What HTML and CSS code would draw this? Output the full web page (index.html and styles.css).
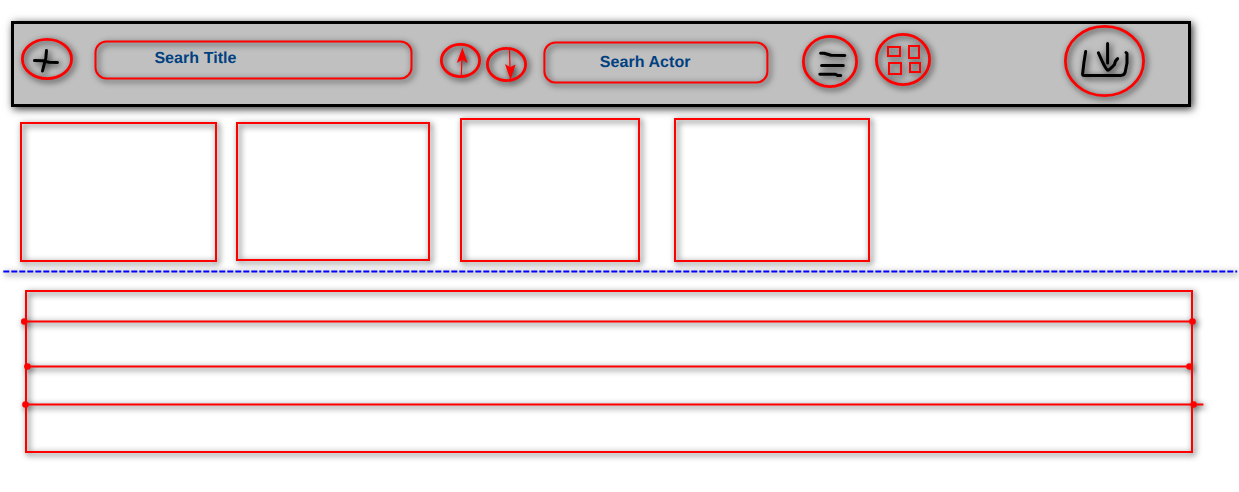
FILE: index.html
```html
<!DOCTYPE html>
<html lang="en">
<head>
<meta charset="utf-8">
<title>Media library</title>
<link rel="stylesheet" href="styles.css">
</head>
<body>
<header class="toolbar">
  <svg class="icon add" width="52" height="42" viewBox="0 0 52 42">
    <ellipse class="ring" cx="26" cy="21" rx="24.6" ry="19.6"/>
    <path class="ink" d="M25.5 12.6L24.8 20L21.5 33M13.5 22.6L22 22.7L28 24.2L36.5 24.4"/>
  </svg>
  <div class="field field-title">
    <svg class="outline" width="319" height="40"><rect x="1.5" y="1.5" width="316" height="37" rx="11"/></svg>
    <span>Searh Title</span>
  </div>
  <svg class="icon up" width="41" height="35" viewBox="0 0 41 35">
    <ellipse class="ring" cx="20.5" cy="17.5" rx="19.1" ry="16.1"/>
    <path class="shaft" d="M21.3 33L22 12"/>
    <path class="head" d="M22.4 4.5L27.6 20L22.2 16.7L16.8 20Z"/>
  </svg>
  <svg class="icon down" width="41" height="35" viewBox="0 0 41 35">
    <ellipse class="ring" cx="20.5" cy="17.5" rx="19.1" ry="16.1"/>
    <path class="shaft" d="M23.5 3L24 22"/>
    <path class="head" d="M24.5 33L19 17L24.2 20.3L29.6 17.6Z"/>
  </svg>
  <div class="field field-actor">
    <svg class="outline" width="226" height="43"><rect x="1.4" y="1.5" width="223" height="40" rx="11"/></svg>
    <span>Searh Actor</span>
  </div>
  <svg class="icon list" width="56" height="53" viewBox="0 0 56 53">
    <ellipse class="ring" cx="28" cy="26.5" rx="26.6" ry="25.1"/>
    <path class="ink" d="M18.6 18.3L22 18.2L29 20.2L42.8 20.4M19.6 30.4H41.3M17.8 39.3L33.5 39.2L36 40.6H38.7"/>
  </svg>
  <svg class="icon tiles" width="56" height="53" viewBox="0 0 56 53">
    <ellipse class="ring" cx="28" cy="26.5" rx="26.6" ry="25.1"/>
    <path class="tile" d="M13 14h12v9h-12zM34 13h10v12h-10zM14 30h12v11h-12zM35 30h10v9h-10z"/>
  </svg>
  <svg class="icon download" width="81" height="72" viewBox="0 0 81 72">
    <ellipse class="ring" cx="40.5" cy="36" rx="39.1" ry="34.6"/>
    <path class="ink" d="M21.7 26.5L20 37L18.6 49Q18.6 50.5 20 50.5H56.5Q60.5 50.3 61.2 47L63 38V28.5L62 27.5M43.6 18.4V38M34.4 27.8L39 38Q42.5 45 44 45.2Q45.5 45 50.5 39.5Q51 35.5 53.6 33.7"/>
  </svg>
</header>

<main>
  <section class="cards">
    <article class="card card-1"></article>
    <article class="card card-2"></article>
    <article class="card card-3"></article>
    <article class="card card-4"></article>
  </section>

  <svg class="divider" width="1239" height="3" viewBox="0 0 1239 3">
    <path d="M3.3 1.5H1237.2"/>
  </svg>

  <section class="table">
    <div class="row row-1"></div>
    <svg class="rule" width="1190" height="7" viewBox="0 0 1190 7">
      <path d="M7.3 3.5H1175.5"/><circle cx="7.3" cy="3.5" r="3.3"/><circle cx="1175.5" cy="3.5" r="3.3"/>
    </svg>
    <div class="row row-2"></div>
    <svg class="rule" width="1190" height="7" viewBox="0 0 1190 7">
      <path d="M10.4 3.5H1172.5"/><circle cx="10.4" cy="3.5" r="3.3"/><circle cx="1172.5" cy="3.5" r="3.3"/>
    </svg>
    <div class="row row-3"></div>
    <svg class="rule" width="1190" height="7" viewBox="0 0 1190 7">
      <path d="M8.5 3.5H1186.4"/><circle cx="8.5" cy="3.5" r="3.3"/><circle cx="1176.6" cy="3.5" r="3.3"/>
    </svg>
    <div class="row row-4"></div>
  </section>
</main>
</body>
</html>
```
FILE: styles.css
```css
:root {
  --red: #ff0000;
  --shadow: drop-shadow(2px 2px 3px rgba(0, 0, 0, .8));
}

* { box-sizing: border-box; }

body {
  margin: 0;
  padding-top: 21px;
  height: 492px;
  overflow: hidden;
  background: #fff;
  font-family: "Liberation Sans", Arial, sans-serif;
}

svg { display: block; flex: none; overflow: visible; }

/* Toolbar */
.toolbar {
  display: flex;
  align-items: flex-start;
  width: 1180px;
  height: 86px;
  margin-left: 11px;
  border: 3px solid #000;
  background: #c0c0c0;
  box-shadow: 2px 2px 8px rgba(0, 0, 0, .8);
}

.icon { filter: var(--shadow); fill: none; }
.ring { stroke: var(--red); stroke-width: 2.8; }
.ink { stroke: #000; stroke-width: 3; stroke-linecap: round; stroke-linejoin: round; }
.tile { stroke: var(--red); stroke-width: 2; }
.shaft { stroke: var(--red); stroke-width: 1.2; }
.head { fill: var(--red); }

.add { margin: 14px 0 0 7px; }
.up { margin: 19px 0 0 27px; }
.down { margin: 23px 0 0 5px; }
.list { margin: 11px 0 0 33px; }
.tiles { margin: 9px 0 0 17px; }
.download { margin: 1px 0 0 133px; }

.field {
  display: grid;
  flex: none;
  color: #004080;
  font-size: 16px;
  font-weight: bold;
  line-height: 18px;
  letter-spacing: .06px;
  text-rendering: geometricPrecision;
  white-space: nowrap;
}

.field > * { grid-area: 1 / 1; }

.outline {
  fill: none;
  stroke: var(--red);
  stroke-width: 2;
  filter: var(--shadow);
}

.field-title { width: 319px; height: 40px; margin: 16px 0 0 21px; }
.field-title span { padding: 10px 0 0 60.4px; }
.field-actor { width: 226px; height: 43px; margin: 17px 0 0 16px; }
.field-actor span { padding: 13px 0 0 56.8px; }

/* Cards */
.cards {
  display: flex;
  height: 163px;
  padding: 11px 0 0 20px;
}

.card { border: 2px solid var(--red); filter: var(--shadow); }
.card-1 { width: 197px; height: 140px; margin-top: 4px; }
.card-2 { width: 194px; height: 139px; margin: 4px 0 0 19px; }
.card-3 { width: 180px; height: 144px; margin-left: 30px; }
.card-4 { width: 196px; height: 144px; margin-left: 34px; }

.divider {
  fill: none;
  stroke: #0000ff;
  stroke-width: 2;
  stroke-dasharray: 6 2;
  filter: var(--shadow);
}

/* Table */
.table {
  width: 1168px;
  height: 163px;
  margin: 17px 0 0 25px;
  border: 2px solid var(--red);
  filter: var(--shadow);
}

.row-1 { height: 26px; }
.row-2 { height: 38px; }
.row-3 { height: 31px; }
.row-4 { height: 43px; }

.rule {
  margin-left: -10px;
  fill: var(--red);
  stroke: none;
}

.rule path { stroke: var(--red); stroke-width: 2; }
```
